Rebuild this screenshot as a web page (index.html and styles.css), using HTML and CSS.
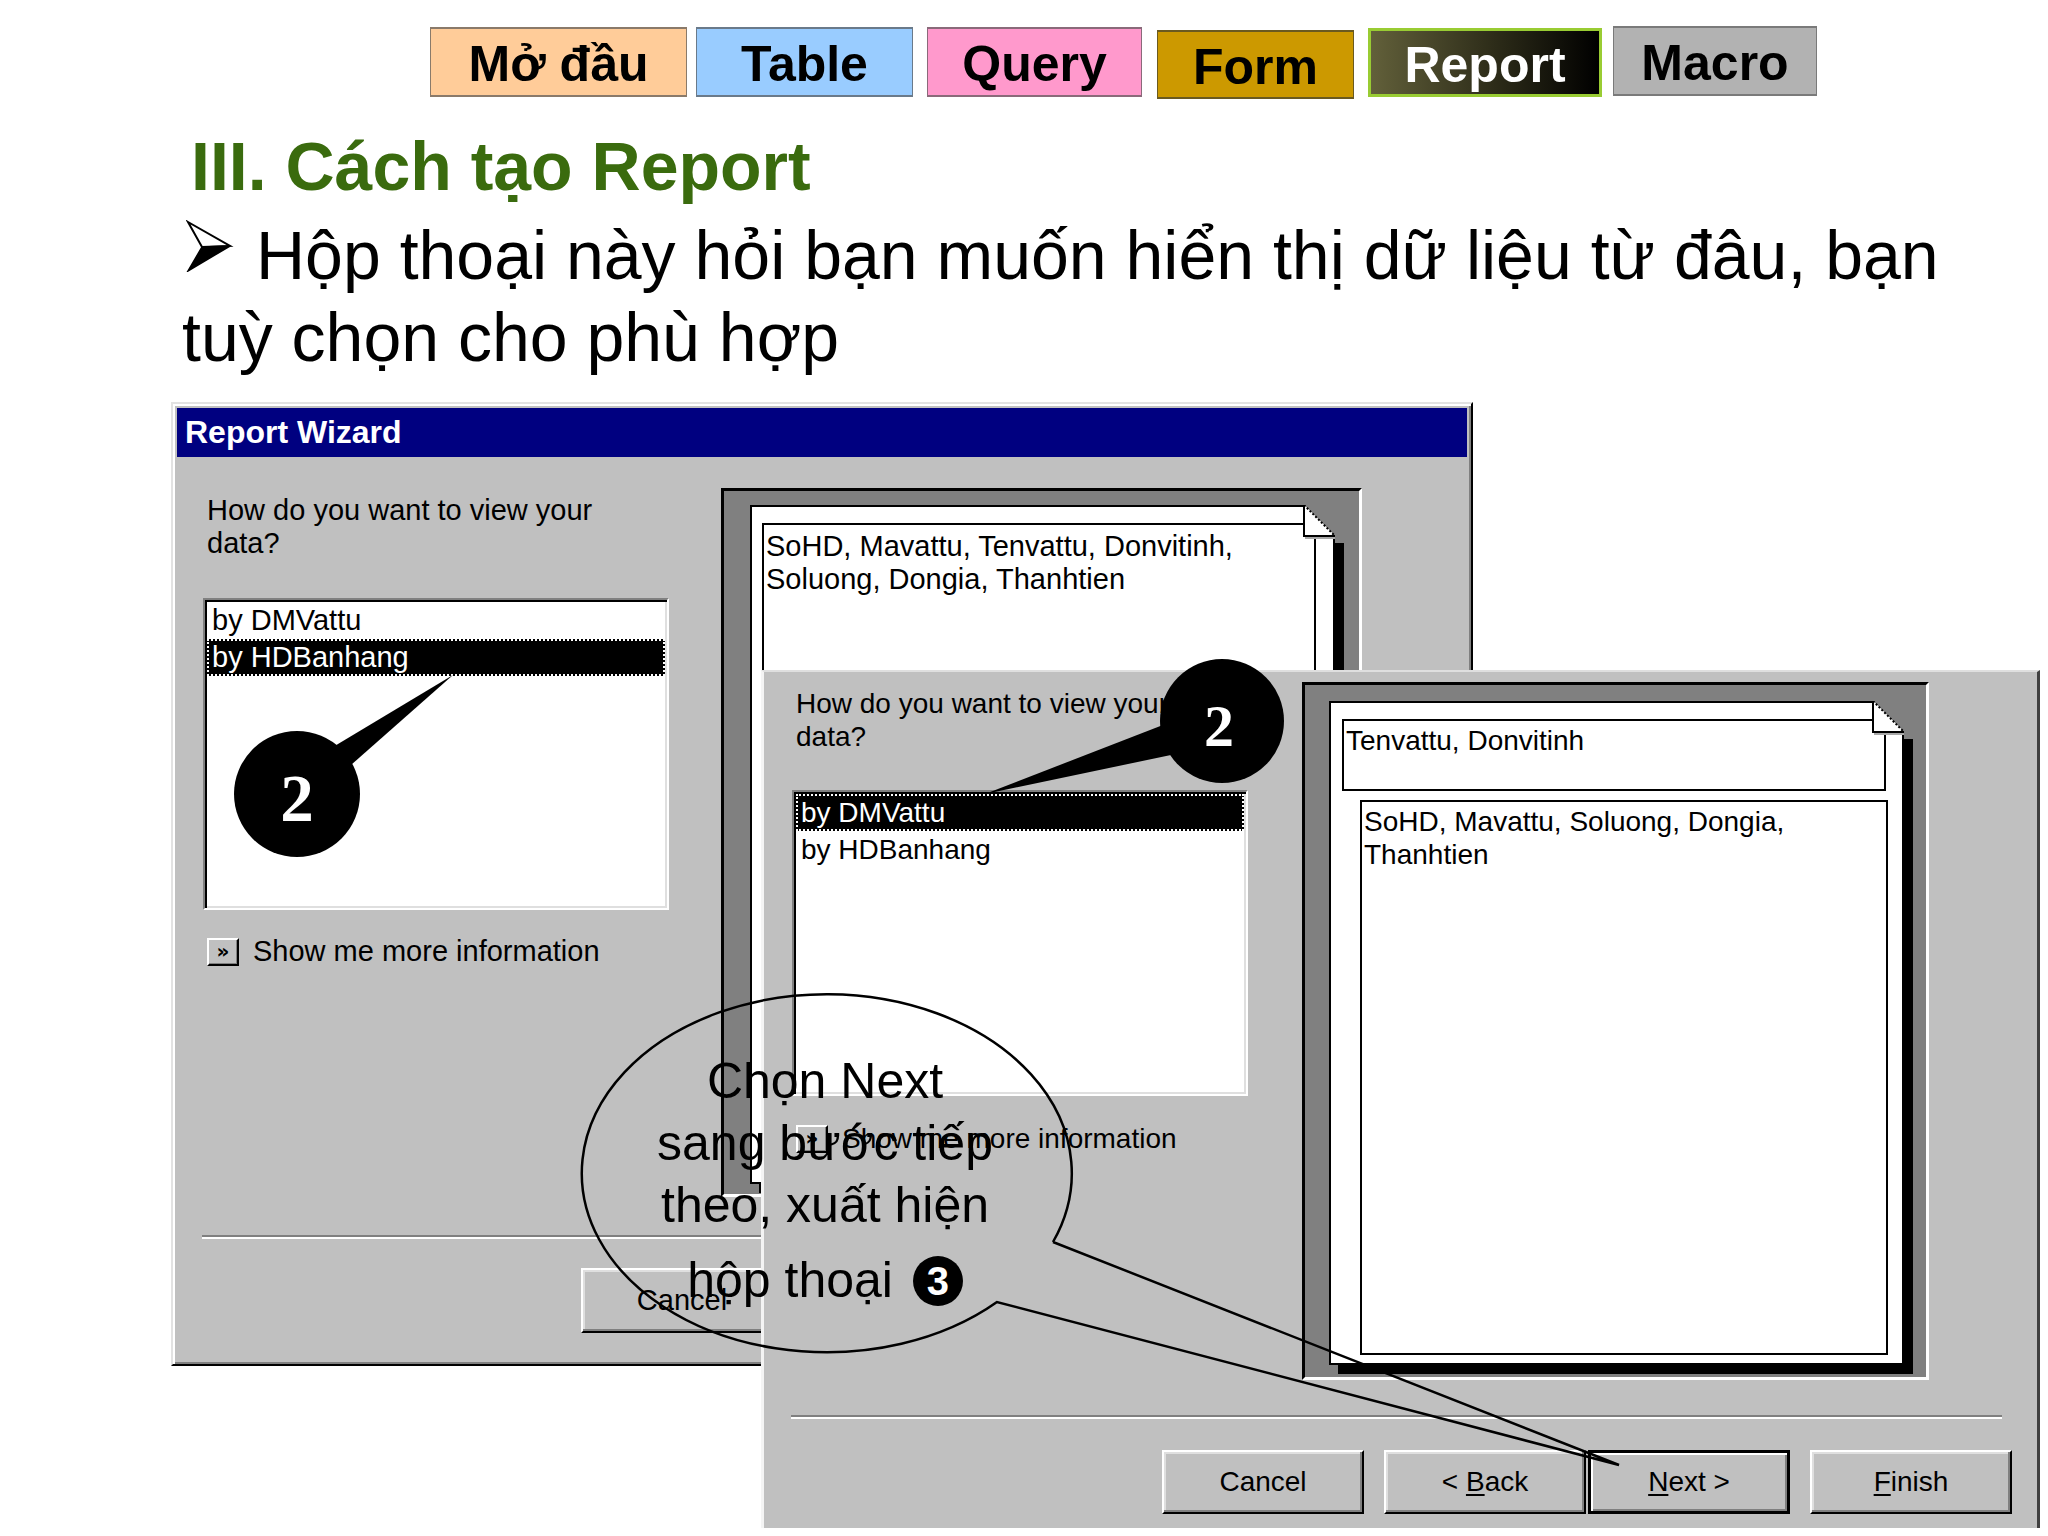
FILE: index.html
```html
<!DOCTYPE html>
<html lang="vi">
<head>
<meta charset="utf-8">
<title>III. Cách tạo Report</title>
<link rel="stylesheet" href="styles.css">
</head>
<body>
<div class="slide">
  <nav class="tabs">
    <div class="tab tab-intro">Mở đầu</div>
    <div class="tab tab-table">Table</div>
    <div class="tab tab-query">Query</div>
    <div class="tab tab-form">Form</div>
    <div class="tab tab-report">Report</div>
    <div class="tab tab-macro">Macro</div>
  </nav>

  <h1 class="heading">III. Cách tạo Report</h1>

  <p class="bullet"><svg class="arrow" viewBox="0 0 48 52" width="48" height="52"><polygon points="2,2 44,26 16,27" fill="#fff" stroke="#000" stroke-width="2" stroke-linejoin="miter"/><polygon points="16,27 44,26 2,51" fill="#000" stroke="#000" stroke-width="1.5"/></svg>Hộp thoại này hỏi bạn muốn hiển thị dữ liệu từ đâu, bạn<br>tuỳ chọn cho phù hợp</p>

  <!-- Back wizard window -->
  <div class="wiz wiz-back">
    <div class="wiz-title">Report Wizard</div>
    <div class="wiz-main">
      <div class="wiz-left">
        <div class="wiz-q">How do you want to view your<br>data?</div>
        <div class="listbox">
          <div class="li">by DMVattu</div>
          <div class="li sel">by HDBanhang</div>
        </div>
        <div class="more"><span class="more-btn">»</span><span>Show me more information</span></div>
      </div>
      <div class="preview">
        <div class="paper">
          <div class="box box-detail">SoHD, Mavattu, Tenvattu, Donvitinh,<br>Soluong, Dongia, Thanhtien</div>
          <svg class="dogear" viewBox="0 0 44 40" width="44" height="40"><polygon points="4,0 44,0 44,38 35,38 35,31" fill="#808080"/><line x1="5" y1="33" x2="35" y2="33" stroke="#a8a8a8" stroke-width="2"/><polygon points="4,0 35,31 4,31" fill="#fff"/><path d="M4 0 V31 H35" fill="none" stroke="#000" stroke-width="2"/><line x1="4" y1="0" x2="35" y2="31" stroke="#000" stroke-width="2" stroke-dasharray="2 2"/></svg>
        </div>
      </div>
    </div>
    <div class="sep"></div>
    <div class="btns">
      <div class="btn"><span>Cancel</span></div>
      <div class="btn btn-back"><span>&lt; <u>B</u>ack</span></div>
      <div class="btn btn-next btn-default"><span><u>N</u>ext &gt;</span></div>
      <div class="btn btn-finish"><span><u>F</u>inish</span></div>
    </div>
  </div>

  <!-- Front wizard window -->
  <div class="wiz wiz-front">
    <div class="wiz-main">
      <div class="wiz-left">
        <div class="wiz-q">How do you want to view your<br>data?</div>
        <div class="listbox">
          <div class="li sel">by DMVattu</div>
          <div class="li">by HDBanhang</div>
        </div>
        <div class="more"><span class="more-btn">»</span><span>Show me more information</span></div>
      </div>
      <div class="preview">
        <div class="paper">
          <div class="box box-head">Tenvattu, Donvitinh</div>
          <div class="box box-detail">SoHD, Mavattu, Soluong, Dongia,<br>Thanhtien</div>
          <svg class="dogear" viewBox="0 0 44 40" width="44" height="40"><polygon points="4,0 44,0 44,38 35,38 35,31" fill="#808080"/><line x1="5" y1="33" x2="35" y2="33" stroke="#a8a8a8" stroke-width="2"/><polygon points="4,0 35,31 4,31" fill="#fff"/><path d="M4 0 V31 H35" fill="none" stroke="#000" stroke-width="2"/><line x1="4" y1="0" x2="35" y2="31" stroke="#000" stroke-width="2" stroke-dasharray="2 2"/></svg>
        </div>
      </div>
    </div>
    <div class="sep"></div>
    <div class="btns">
      <div class="btn"><span>Cancel</span></div>
      <div class="btn btn-back"><span>&lt; <u>B</u>ack</span></div>
      <div class="btn btn-next btn-default"><span><u>N</u>ext &gt;</span></div>
      <div class="btn btn-finish"><span><u>F</u>inish</span></div>
    </div>
  </div>

  <!-- Callouts drawn over the screenshots -->
  <svg class="callouts" viewBox="0 0 2048 1536" width="2048" height="1536">
    <circle cx="297" cy="794" r="63" fill="#000"/>
    <polygon points="318,756 453,675 334,780" fill="#000"/>
    <text x="297" y="821" class="num num-a">2</text>

    <circle cx="1222" cy="721" r="62" fill="#000"/>
    <polygon points="1181,718 985,794 1190,751" fill="#000"/>
    <text x="1219" y="746" class="num num-b">2</text>

    <path d="M1053 1242 L1619 1465 L997 1302 A245 179 0 1 1 1053 1242" fill="none" stroke="#000" stroke-width="2.5" stroke-linejoin="miter"/>
  </svg>

  <div class="bubble-text">
    <span class="bl">Chọn Next</span>
    <span class="bl">sang bước tiếp</span>
    <span class="bl">theo, xuất hiện</span>
    <span class="bl bl-last">hộp thoại <span class="step">3</span></span>
  </div>
</div>
</body>
</html>
```

FILE: styles.css
```css
* { box-sizing: border-box; }

html, body {
  margin: 0;
  padding: 0;
  background: #fff;
}

.slide {
  position: relative;
  width: 2048px;
  height: 1536px;
  overflow: hidden;
  background: #fff;
  font-family: "Liberation Sans", Arial, sans-serif;
  color: #000;
}

/* ---------- Tabs ---------- */
.tabs {
  display: flex;
  align-items: flex-start;
  padding: 26px 0 0 430px;
  height: 99px;
}

.tab {
  height: 70px;
  border: 2px solid #6f6f6f;
  border-left-width: 1px;
  border-right-width: 1px;
  padding-top: 4px;
  font-size: 50px;
  font-weight: bold;
  line-height: 62px;
  text-align: center;
  white-space: nowrap;
  color: #000;
}

.tab-intro  { width: 257px; margin-top: 1px; background: #ffcc99; border-color: #8a7a6a; }
.tab-table  { width: 217px; margin-top: 1px; margin-left: 9px;  background: #99ccff; border-color: #6a7a8a; }
.tab-query  { width: 215px; margin-top: 1px; margin-left: 14px; background: #ff99cc; border-color: #8a6a7a; }
.tab-form   { width: 197px; height: 69px; margin-top: 4px; margin-left: 15px; background: #cc9900; border-color: #6a5a20; }
.tab-report {
  width: 234px;
  height: 69px;
  margin-top: 2px;
  margin-left: 14px;
  border: 3px solid #99cc33;
  padding-top: 3px;
  background: linear-gradient(to right, #62603a 0%, #2c2b18 55%, #000 100%);
  color: #fff;
}
.tab-macro  { width: 204px; margin-left: 11px; background: #b2b2b2; border-color: #7a7a7a; }

/* ---------- Heading & bullet ---------- */
.heading {
  margin: 27px 0 0;
  padding-left: 191px;
  font-size: 68px;
  line-height: 80px;
  font-weight: bold;
  color: #3a6b0e;
  white-space: nowrap;
}

.bullet {
  margin: 8px 0 0;
  padding-left: 182px;
  font-size: 68px;
  line-height: 82px;
  white-space: nowrap;
}

.arrow {
  display: inline-block;
  vertical-align: 7px;
  margin-left: 4px;
  margin-right: 22px;
}

/* ---------- Win95 wizard windows ---------- */
.wiz {
  position: absolute;
  background: #c0c0c0;
  display: flex;
  flex-direction: column;
  font-family: "Liberation Sans", Arial, sans-serif;
  color: #000;
}

.wiz-back {
  left: 171px;
  top: 402px;
  width: 1302px;
  height: 964px;
  border: 2px solid;
  border-color: #e2e2e2 #000 #000 #e2e2e2;
  box-shadow: inset 2px 2px 0 #fff, inset -2px -2px 0 #808080;
  padding: 4px;
  font-size: 29px;
}

.wiz-front {
  left: 761px;
  top: 670px;
  width: 1279px;
  height: 858px;
  border-style: solid;
  border-width: 2px 3px 0 3px;
  border-color: #dfdfdf #404040 #c0c0c0 #f4f4f4;
  font-size: 28px;
}

.wiz-title {
  height: 49px;
  background: #000080;
  color: #fff;
  font-size: 32px;
  font-weight: bold;
  line-height: 49px;
  padding-left: 8px;
  flex: none;
}

.wiz-main {
  display: flex;
  align-items: flex-start;
  flex: none;
}

.wiz-left {
  display: flex;
  flex-direction: column;
  flex: none;
}

.wiz-q {
  line-height: 33px;
  padding-left: 4px;
  white-space: nowrap;
}

.listbox {
  background: #fff;
  border: 2px solid;
  border-color: #808080 #fff #fff #808080;
  box-shadow: inset 2px 2px 0 #000, inset -2px -2px 0 #dfdfdf;
  padding: 2px;
}

.li {
  height: 37px;
  line-height: 37px;
  padding-left: 5px;
  white-space: nowrap;
}

.li.sel {
  background: #000;
  color: #fff;
  border: 2px dotted #fff;
  line-height: 33px;
  padding-left: 3px;
}

.more {
  display: flex;
  align-items: center;
  gap: 14px;
  height: 33px;
  padding-left: 4px;
  white-space: nowrap;
}

.more-btn {
  width: 32px;
  height: 28px;
  flex: none;
  border: 2px solid;
  border-color: #fff #000 #000 #fff;
  box-shadow: inset -1px -1px 0 #808080;
  background: #c0c0c0;
  font-family: "DejaVu Sans", sans-serif;
  font-size: 20px;
  font-weight: bold;
  line-height: 22px;
  text-align: center;
}

.preview {
  flex: none;
  display: flex;
  background: #808080;
  border: 3px solid;
  border-color: #000 #fff #fff #000;
}

.paper {
  position: relative;
  flex: 1;
  display: flex;
  flex-direction: column;
  background: #fff;
  border: 2px solid #000;
  box-shadow: 9px 9px 0 #000;
}

.box {
  border: 2px solid #000;
  line-height: 33px;
  padding: 3px 2px;
  white-space: nowrap;
  background: #fff;
}

.dogear {
  position: absolute;
  top: -2px;
  right: -11px;
  display: block;
}

.sep {
  flex: none;
  height: 4px;
  border-top: 2px solid #808080;
  border-bottom: 2px solid #fff;
}

.btns {
  display: flex;
  flex: none;
}

.btn {
  width: 202px;
  display: flex;
  align-items: center;
  justify-content: center;
  background: #c0c0c0;
  border: 2px solid;
  border-color: #fff #000 #000 #fff;
  box-shadow: inset -2px -2px 0 #808080, inset 2px 2px 0 #dfdfdf;
  white-space: pre;
}

.btn-back   { margin-left: 20px; }
.btn-next   { margin-left: 2px; }
.btn-finish { margin-left: 20px; }

.btn-default {
  border: 3px solid #000;
  box-shadow: inset 2px 2px 0 #fff, inset -2px -2px 0 #808080;
}

.btn u { text-underline-offset: 3px; text-decoration-thickness: 2px; }

/* back window geometry */
.wiz-back .wiz-left   { margin-left: 26px; width: 466px; }
.wiz-back .wiz-q      { margin-top: 37px; }
.wiz-back .listbox    { margin-top: 38px; height: 312px; }
.wiz-back .more       { margin-top: 25px; }
.wiz-back .preview    { margin-left: 52px; margin-top: 31px; width: 641px; height: 709px; padding: 14px 24px 10px 26px; }
.wiz-back .box-detail { flex: 1; margin: 16px 17px 12px 10px; padding: 5px 2px; }
.wiz-back .sep        { margin: 38px 25px 0 25px; }
.wiz-back .btns       { margin: 29px 0 0 404px; height: 65px; }

/* front window geometry */
.wiz-front .wiz-left   { margin-left: 28px; width: 456px; }
.wiz-front .wiz-q      { margin-top: 15px; }
.wiz-front .listbox    { margin-top: 37px; height: 306px; }
.wiz-front .more       { margin-top: 26px; }
.wiz-front .preview    { margin-left: 54px; margin-top: 10px; width: 627px; height: 698px; padding: 16px 22px 12px 24px; }
.wiz-front .box-head   { height: 72px; margin: 16px 16px 0 11px; }
.wiz-front .box-detail { flex: 1; margin: 9px 14px 8px 29px; }
.wiz-front .sep        { margin: 35px 35px 0 27px; }
.wiz-front .btns       { margin: 31px 0 0 398px; height: 64px; }

/* ---------- Callouts ---------- */
.callouts {
  position: absolute;
  left: 0;
  top: 0;
  pointer-events: none;
}

.num {
  font-family: "Liberation Serif", "Times New Roman", serif;
  font-weight: bold;
  fill: #fff;
  text-anchor: middle;
}
.num-a { font-size: 67px; }
.num-b { font-size: 60px; }

.bubble-text {
  position: absolute;
  left: 525px;
  top: 1050px;
  width: 600px;
  text-align: center;
  font-family: "Liberation Sans", Arial, sans-serif;
  font-size: 50px;
  line-height: 62px;
  color: #000;
}

.bl { display: block; white-space: nowrap; }
.bl-last { margin-top: 13px; }

.step {
  display: inline-block;
  width: 50px;
  height: 50px;
  margin-left: 6px;
  border-radius: 50%;
  background: #000;
  color: #fff;
  font-size: 40px;
  font-weight: bold;
  line-height: 50px;
  text-align: center;
  vertical-align: 2px;
}
```
